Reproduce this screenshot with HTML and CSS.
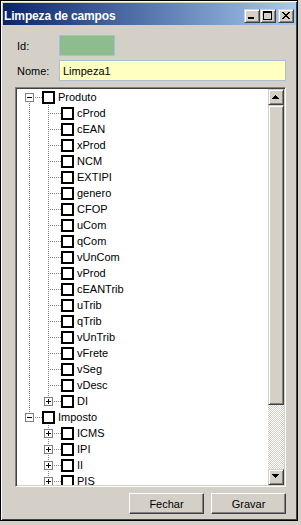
FILE: index.html
```html
<!DOCTYPE html>
<html lang="pt">
<head>
  <meta charset="UTF-8" />
  <title>Limpeza de campos</title>
  <link rel="stylesheet" href="styles.css">
</head>
<body>

<div class="window">
  <!-- Title bar -->
  <div class="titlebar">
    <span class="title">Limpeza de campos</span>
    <div class="caption-btns">
      <button class="cap-btn"><svg width="14" height="12" viewBox="0 0 14 12"><rect x="3" y="7" width="6" height="2" /></svg></button>
      <button class="cap-btn"><svg width="14" height="12" viewBox="0 0 14 12"><path fill-rule="evenodd" d="M2 1h9v9H2z M3 3v6h7V3z" /></svg></button>
      <button class="cap-btn close"><svg width="14" height="12" viewBox="0 0 14 12"><path d="M3 2h2v1H3z M9 2h2v1H9z M4 3h2v1H4z M8 3h2v1H8z M5 4h4v1H5z M6 5h2v1H6z M5 6h4v1H5z M4 7h2v1H4z M8 7h2v1H8z M3 8h2v1H3z M9 8h2v1H9z" /></svg></button>
    </div>
  </div>

  <div class="client">
    <div class="field-row first">
      <label class="field-label">Id:</label>
      <div class="id-box"></div>
    </div>
    <div class="field-row">
      <label class="field-label">Nome:</label>
      <input class="name-input" type="text" value="Limpeza1" />
    </div>

    <!-- Tree with checkboxes -->
    <div class="tree-box">
      <div class="tree-view">
        <ul class="tree">
          <li>
            <div class="row"><span class="exp minus"></span><span class="chk"></span><span class="label">Produto</span></div>
            <ul>
              <li><div class="row"><span class="exp"></span><span class="chk"></span><span class="label">cProd</span></div></li>
              <li><div class="row"><span class="exp"></span><span class="chk"></span><span class="label">cEAN</span></div></li>
              <li><div class="row"><span class="exp"></span><span class="chk"></span><span class="label">xProd</span></div></li>
              <li><div class="row"><span class="exp"></span><span class="chk"></span><span class="label">NCM</span></div></li>
              <li><div class="row"><span class="exp"></span><span class="chk"></span><span class="label">EXTIPI</span></div></li>
              <li><div class="row"><span class="exp"></span><span class="chk"></span><span class="label">genero</span></div></li>
              <li><div class="row"><span class="exp"></span><span class="chk"></span><span class="label">CFOP</span></div></li>
              <li><div class="row"><span class="exp"></span><span class="chk"></span><span class="label">uCom</span></div></li>
              <li><div class="row"><span class="exp"></span><span class="chk"></span><span class="label">qCom</span></div></li>
              <li><div class="row"><span class="exp"></span><span class="chk"></span><span class="label">vUnCom</span></div></li>
              <li><div class="row"><span class="exp"></span><span class="chk"></span><span class="label">vProd</span></div></li>
              <li><div class="row"><span class="exp"></span><span class="chk"></span><span class="label">cEANTrib</span></div></li>
              <li><div class="row"><span class="exp"></span><span class="chk"></span><span class="label">uTrib</span></div></li>
              <li><div class="row"><span class="exp"></span><span class="chk"></span><span class="label">qTrib</span></div></li>
              <li><div class="row"><span class="exp"></span><span class="chk"></span><span class="label">vUnTrib</span></div></li>
              <li><div class="row"><span class="exp"></span><span class="chk"></span><span class="label">vFrete</span></div></li>
              <li><div class="row"><span class="exp"></span><span class="chk"></span><span class="label">vSeg</span></div></li>
              <li><div class="row"><span class="exp"></span><span class="chk"></span><span class="label">vDesc</span></div></li>
              <li><div class="row"><span class="exp plus"></span><span class="chk"></span><span class="label">DI</span></div></li>
            </ul>
          </li>
          <li>
            <div class="row"><span class="exp minus"></span><span class="chk"></span><span class="label">Imposto</span></div>
            <ul>
              <li><div class="row"><span class="exp plus"></span><span class="chk"></span><span class="label">ICMS</span></div></li>
              <li><div class="row"><span class="exp plus"></span><span class="chk"></span><span class="label">IPI</span></div></li>
              <li><div class="row"><span class="exp plus"></span><span class="chk"></span><span class="label">II</span></div></li>
              <li><div class="row"><span class="exp plus"></span><span class="chk"></span><span class="label">PIS</span></div></li>
              <li><div class="row"><span class="exp plus"></span><span class="chk"></span><span class="label">COFINS</span></div></li>
            </ul>
          </li>
        </ul>
      </div>

      <div class="scrollbar">
        <div class="sb-btn"><svg width="14" height="14" viewBox="0 0 14 14"><path d="M6 5h1v1H6z M5 6h3v1H5z M4 7h5v1H4z M3 8h7v1H3z" /></svg></div>
        <div class="sb-thumb"></div>
        <div class="sb-track"></div>
        <div class="sb-btn"><svg width="14" height="14" viewBox="0 0 14 14"><path d="M3 4h7v1H3z M4 5h5v1H4z M5 6h3v1H5z M6 7h1v1H6z" /></svg></div>
      </div>
    </div>

    <div class="actions">
      <button class="btn">Fechar</button>
      <button class="btn">Gravar</button>
    </div>
  </div>
</div>

</body>
</html>
```

FILE: styles.css
```css
* {
  box-sizing: border-box;
}

body {
  margin: 0;
  background: #d4d0c8;
  font-family: "Liberation Sans", Arial, sans-serif;
  font-size: 11px;
  color: #000;
}

/* Window frame */
.window {
  width: 298px;
  height: 521px;
  background: #d4d0c8;
  border: 1px solid #000;
  box-shadow: inset 1px 1px #fff, inset -1px -1px #404040;
  padding: 2px 1px 2px 2px;
  display: flex;
  flex-direction: column;
}

.titlebar {
  height: 22px;
  flex: none;
  display: flex;
  align-items: center;
  padding: 4px 2px 0 1px;
  background: linear-gradient(to right, #0a246a, #a6caf0);
}

.title {
  flex: 1;
  color: #fff;
  font-weight: bold;
  font-size: 12px;
  letter-spacing: -0.15px;
  white-space: nowrap;
}

.caption-btns {
  display: flex;
}

.cap-btn,
.sb-btn,
.sb-thumb {
  background: #d4d0c8;
  border: 1px solid;
  border-color: #d4d0c8 #404040 #404040 #d4d0c8;
  box-shadow: inset 1px 1px #fff, inset -1px -1px #808080;
}

.cap-btn {
  width: 16px;
  height: 14px;
  padding: 0;
  display: block;
}

.cap-btn svg,
.sb-btn svg {
  display: block;
  fill: #000;
}

.cap-btn.close {
  margin-left: 2px;
}

/* Form */
.client {
  flex: 1;
  display: flex;
  flex-direction: column;
  padding: 0 10px 0 12px;
}

.field-row {
  display: flex;
  align-items: center;
  padding-left: 2px;
  margin-top: 4px;
}

.field-row.first {
  margin-top: 10px;
}

.field-label {
  width: 42px;
  flex: none;
}

.id-box {
  width: 56px;
  height: 21px;
  background: #8fbc8f;
  border: 1px solid #a8bfd8;
}

.name-input {
  flex: 1;
  min-width: 0;
  height: 21px;
  margin: 0;
  padding: 0 3px;
  background: #ffffc0;
  border: 1px solid #a8bfd8;
  font-family: "Liberation Sans", Arial, sans-serif;
  font-size: 11px;
  color: #000;
  outline: none;
}

/* Tree view */
.tree-box {
  height: 400px;
  margin-top: 6px;
  flex: none;
  display: flex;
  padding: 1px;
  background: #fff;
  border: 1px solid;
  border-color: #808080 #fff #fff #808080;
  box-shadow: inset 1px 1px #404040, inset -1px -1px #d4d0c8;
}

.tree-view {
  flex: 1;
  overflow: hidden;
  background: #fff;
}

.tree,
.tree ul {
  list-style: none;
  margin: 0;
  padding: 0;
}

.tree ul {
  padding-left: 19px;
}

.tree li {
  position: relative;
}

.tree li::before {
  content: "";
  position: absolute;
  left: 12px;
  top: 0;
  bottom: 0;
  width: 1px;
  background: repeating-linear-gradient(to bottom, #808080 0 1px, transparent 1px 2px);
}

.tree li:last-child::before {
  bottom: auto;
  height: 9px;
}

.tree > li:first-child::before {
  top: 8px;
}

.row {
  position: relative;
  height: 16px;
  display: flex;
  align-items: flex-start;
  white-space: nowrap;
}

.row::before {
  content: "";
  position: absolute;
  left: 12px;
  top: 8px;
  width: 13px;
  height: 1px;
  background: repeating-linear-gradient(to right, #808080 0 1px, transparent 1px 2px);
}

.exp {
  position: relative;
  flex: none;
  width: 9px;
  height: 9px;
  margin: 4px 0 0 8px;
}

.exp.plus,
.exp.minus {
  border: 1px solid #808080;
  background: #fff;
}

.exp.plus::before,
.exp.minus::before {
  content: "";
  position: absolute;
  left: 1px;
  top: 3px;
  width: 5px;
  height: 1px;
  background: #000;
}

.exp.plus::after {
  content: "";
  position: absolute;
  left: 3px;
  top: 1px;
  width: 1px;
  height: 5px;
  background: #000;
}

.chk {
  position: relative;
  flex: none;
  width: 13px;
  height: 13px;
  margin: 2px 0 0 8px;
  border: 2px solid #000;
  background: #fff;
}

.label {
  margin-left: 3px;
  line-height: 16px;
}

/* Scrollbar */
.scrollbar {
  width: 16px;
  flex: none;
  display: flex;
  flex-direction: column;
}

.sb-btn {
  height: 16px;
  flex: none;
}

.sb-thumb {
  height: 300px;
  flex: none;
}

.sb-track {
  flex: 1;
  background: conic-gradient(#fff 25%, #d4d0c8 0 50%, #fff 0 75%, #d4d0c8 0);
  background-size: 2px 2px;
}

/* Buttons */
.actions {
  display: flex;
  justify-content: flex-end;
  gap: 7px;
  margin-top: 6px;
}

.btn {
  width: 75px;
  height: 21px;
  padding: 0;
  background: #d4d0c8;
  border: 1px solid;
  border-color: #fff #404040 #404040 #fff;
  box-shadow: inset -1px -1px #808080;
  font-family: "Liberation Sans", Arial, sans-serif;
  font-size: 11px;
  color: #000;
}
```
